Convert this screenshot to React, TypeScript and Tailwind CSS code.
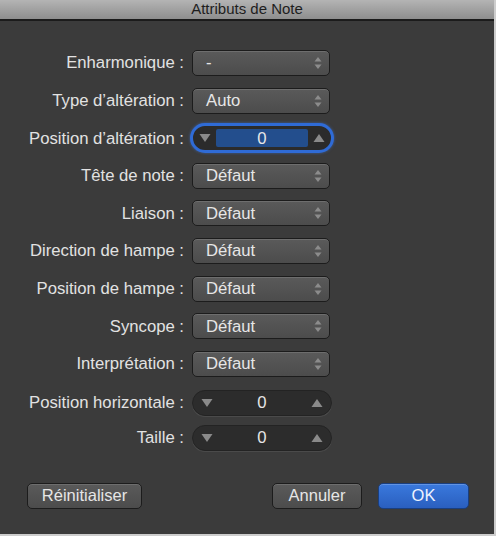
import React from "react"

const font = { fontFamily: '"Liberation Sans", Arial, sans-serif' }

const Chevrons = () => (
  <svg width="8" height="14" viewBox="0 0 8 14" className="shrink-0">
    <path d="M4 1 L7.5 5.5 L0.5 5.5 Z" fill="#8c8c8c" />
    <path d="M4 13 L7.5 8.5 L0.5 8.5 Z" fill="#8c8c8c" />
  </svg>
)

const Tri = ({ up }: { up?: boolean }) => (
  <svg width="12" height="10" viewBox="0 0 12 10" className="shrink-0">
    <path d={up ? "M6 1 L11.5 9 L0.5 9 Z" : "M6 9 L11.5 1 L0.5 1 Z"} fill="#8a8a8a" />
  </svg>
)

const Popup = ({ value }: { value: string }) => (
  <div className="flex h-[26px] w-[138px] items-center justify-between rounded-[5px] border border-[#1c1c1c] bg-gradient-to-b from-[#5a5a5a] to-[#4c4c4c] pl-[13px] pr-[7px] text-[16.7px] text-[#e6e6e6] shadow-[inset_0_1px_0_rgba(255,255,255,0.12)]">
    <span>{value}</span>
    <Chevrons />
  </div>
)

const Stepper = ({ value, focused }: { value: string; focused?: boolean }) =>
  focused ? (
    <div className="-mx-[2px] flex h-[30px] w-[144px] items-center rounded-full border-[3px] border-[#2f6bd6] bg-[#2b2b2b] px-[6px] shadow-[0_0_3px_rgba(60,120,230,0.6)]">
      <Tri />
      <div className="mx-[5px] flex h-[18px] flex-1 items-center justify-center rounded-[2px] bg-[#234e8d] text-[16.7px] text-[#e8e8e8]">
        {value}
      </div>
      <Tri up />
    </div>
  ) : (
    <div className="flex h-[26px] w-[140px] items-center justify-between rounded-full border border-[#232323] bg-[#2c2c2c] px-[8px] text-[16.7px] text-[#e6e6e6] shadow-[0_1px_0_rgba(255,255,255,0.08)]">
      <Tri />
      <span>{value}</span>
      <Tri up />
    </div>
  )

const Row = ({ label, children, className = "" }: { label: string; children: React.ReactNode; className?: string }) => (
  <div className={`flex h-[26px] items-center ${className}`}>
    <div className="w-[185px] whitespace-nowrap pr-[1px] text-right text-[16.7px] text-[#e2e2e2]">{label}</div>
    <div className="ml-[7px]">{children}</div>
  </div>
)

const Button = ({ label, primary, className = "" }: { label: string; primary?: boolean; className?: string }) => (
  <div
    className={`flex h-[26px] items-center justify-center rounded-[5px] border text-[16.5px] ${
      primary
        ? "border-[#1a3f80] bg-gradient-to-b from-[#3a79dd] to-[#2a5fbf] text-[#eef3ff] shadow-[inset_0_1px_0_rgba(255,255,255,0.2)]"
        : "border-[#1c1c1c] bg-gradient-to-b from-[#5a5a5a] to-[#4c4c4c] text-[#e6e6e6] shadow-[inset_0_1px_0_rgba(255,255,255,0.12)]"
    } ${className}`}
  >
    {label}
  </div>
)

export default function App() {
  return (
    <div style={font} className="flex h-[536px] w-[496px] flex-col overflow-hidden border-b-2 border-r-2 border-[#cdcdcd] bg-[#3b3b3b]">
      <div className="flex h-[19px] shrink-0 items-center justify-center bg-gradient-to-b from-[#b4b4b4] to-[#8e8e8e] text-[15px] text-[#1e1e1e]">
        Attributs de Note
      </div>
      <div className="h-[2px] shrink-0 bg-[#1b1b1b]" />
      <div className="flex flex-col pt-[29px]">
        <Row label="Enharmonique :"><Popup value="-" /></Row>
        <Row label="Type d’altération :" className="mt-[11.6px]"><Popup value="Auto" /></Row>
        <Row label="Position d’altération :" className="mt-[11.6px]"><Stepper value="0" focused /></Row>
        <Row label="Tête de note :" className="mt-[11.6px]"><Popup value="Défaut" /></Row>
        <Row label="Liaison :" className="mt-[11.6px]"><Popup value="Défaut" /></Row>
        <Row label="Direction de hampe :" className="mt-[11.6px]"><Popup value="Défaut" /></Row>
        <Row label="Position de hampe :" className="mt-[11.6px]"><Popup value="Défaut" /></Row>
        <Row label="Syncope :" className="mt-[11.6px]"><Popup value="Défaut" /></Row>
        <Row label="Interprétation :" className="mt-[11.6px]"><Popup value="Défaut" /></Row>
        <Row label="Position horizontale :" className="mt-[13px]"><Stepper value="0" /></Row>
        <Row label="Taille :" className="mt-[9px]"><Stepper value="0" /></Row>
      </div>
      <div className="mt-[32px] flex items-center pl-[27px] pr-[25px]">
        <Button label="Réinitialiser" className="w-[115px]" />
        <div className="flex-1" />
        <Button label="Annuler" className="w-[90px]" />
        <Button label="OK" primary className="ml-[16px] w-[91px]" />
      </div>
    </div>
  )
}
